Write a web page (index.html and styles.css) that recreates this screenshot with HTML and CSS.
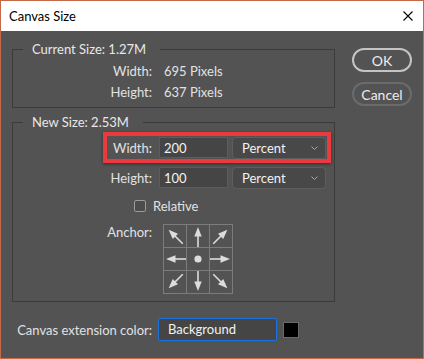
FILE: index.html
```html
<!DOCTYPE html>
<html lang="en">
<head>
  <meta charset="UTF-8" />
  <meta name="viewport" content="width=device-width, initial-scale=1.0"/>
  <title>Canvas Size</title>
  <link rel="stylesheet" href="styles.css">
</head>
<body>

<div class="dialog">
  <header class="titlebar">
    <span class="title">Canvas Size</span>
    <svg class="close" width="10" height="10" viewBox="0 0 10 10">
      <path d="M0.5 0.5 L9.5 9.5 M9.5 0.5 L0.5 9.5" stroke="#000" stroke-width="1.1" fill="none"/>
    </svg>
  </header>

  <div class="content">
    <form class="main">
      <fieldset class="group current">
        <legend>Current Size: 1.27M</legend>
        <div class="rows">
          <span class="label">Width:</span><span class="value">695 Pixels</span>
          <span class="label">Height:</span><span class="value">637 Pixels</span>
        </div>
      </fieldset>

      <fieldset class="group newsize">
        <legend>New Size: 2.53M</legend>
        <div class="fields">
          <label class="label">Width:</label>
          <input class="text" value="200">
          <div class="select">Percent<svg class="chevron" width="7" height="4" viewBox="0 0 7 4"><path d="M0.5 0.5 L3.5 3.5 L6.5 0.5" stroke="#a8a8a8" fill="none"/></svg></div>

          <label class="label">Height:</label>
          <input class="text" value="100">
          <div class="select">Percent<svg class="chevron" width="7" height="4" viewBox="0 0 7 4"><path d="M0.5 0.5 L3.5 3.5 L6.5 0.5" stroke="#a8a8a8" fill="none"/></svg></div>

          <span class="highlight"></span>
        </div>

        <div class="relative">
          <span class="checkbox"></span>
          <span>Relative</span>
        </div>

        <div class="anchor-row">
          <span class="label">Anchor:</span>
          <div class="anchor">
            <div class="cell"><svg viewBox="0 0 22 22"><g transform="rotate(-45 11 11)"><path d="M11 2 L14.7 11.5 L7.3 11.5 Z"/><path class="shaft" d="M11 11 L11 22"/></g></svg></div>
            <div class="cell"><svg viewBox="0 0 22 22"><g><path d="M11 2 L14.7 11.5 L7.3 11.5 Z"/><path class="shaft" d="M11 11 L11 22"/></g></svg></div>
            <div class="cell"><svg viewBox="0 0 22 22"><g transform="rotate(45 11 11)"><path d="M11 2 L14.7 11.5 L7.3 11.5 Z"/><path class="shaft" d="M11 11 L11 22"/></g></svg></div>
            <div class="cell"><svg viewBox="0 0 22 22"><g transform="rotate(-90 11 11)"><path d="M11 2 L14.7 11.5 L7.3 11.5 Z"/><path class="shaft" d="M11 11 L11 22"/></g></svg></div>
            <div class="cell"><svg viewBox="0 0 22 22"><circle cx="11" cy="11" r="3.6"/></svg></div>
            <div class="cell"><svg viewBox="0 0 22 22"><g transform="rotate(90 11 11)"><path d="M11 2 L14.7 11.5 L7.3 11.5 Z"/><path class="shaft" d="M11 11 L11 22"/></g></svg></div>
            <div class="cell"><svg viewBox="0 0 22 22"><g transform="rotate(-135 11 11)"><path d="M11 2 L14.7 11.5 L7.3 11.5 Z"/><path class="shaft" d="M11 11 L11 22"/></g></svg></div>
            <div class="cell"><svg viewBox="0 0 22 22"><g transform="rotate(180 11 11)"><path d="M11 2 L14.7 11.5 L7.3 11.5 Z"/><path class="shaft" d="M11 11 L11 22"/></g></svg></div>
            <div class="cell"><svg viewBox="0 0 22 22"><g transform="rotate(135 11 11)"><path d="M11 2 L14.7 11.5 L7.3 11.5 Z"/><path class="shaft" d="M11 11 L11 22"/></g></svg></div>
          </div>
        </div>
      </fieldset>

      <div class="extension">
        <span class="label">Canvas extension color:</span>
        <div class="color-field">Background</div>
        <span class="swatch"></span>
      </div>
    </form>

    <div class="buttons">
      <button class="btn primary">OK</button>
      <button class="btn">Cancel</button>
    </div>
  </div>
</div>

</body>
</html>
```

FILE: styles.css
```css
:root {
  --panel: #535353;
  --text: #e2e2e2;
  --frame: #3b3b3b;
  --field: #454545;
}

* {
  box-sizing: border-box;
  margin: 0;
  padding: 0;
}

body {
  font-family: "Lato", "Open Sans", sans-serif;
  font-size: 13px;
  color: var(--text);
}

.dialog {
  width: 424px;
  height: 359px;
  border: 1px solid #c4694a;
  display: flex;
  flex-direction: column;
  background: var(--panel);
}

/* Title bar */
.titlebar {
  height: 30px;
  background: #fff;
  display: flex;
  align-items: center;
  justify-content: space-between;
  padding: 0 10px 0 8px;
}

.title {
  color: #000;
  font-size: 13px;
}

.close {
  display: block;
  margin-top: -1px;
}

/* Body */
.content {
  flex: 1;
  display: flex;
  padding: 10px 0 0 11px;
}

.main {
  width: 323px;
}

.group {
  border: 1px solid var(--frame);
  padding: 0;
}

.group legend {
  margin-left: 10px;
  padding: 0 14px 0 9px;
  line-height: 16px;
  color: #e8e8e8;
}

.label {
  text-align: right;
  line-height: 16px;
}

/* Current size */
.current {
  padding: 4px 0 5px;
}

.rows {
  display: grid;
  grid-template-columns: 139px auto;
  grid-auto-rows: 20px;
  row-gap: 1px;
  column-gap: 12px;
  align-items: center;
}

/* New size */
.newsize {
  margin-top: 6px;
  padding: 7px 0 7px;
}

.fields {
  position: relative;
  display: grid;
  grid-template-columns: 142px 69px 94px;
  grid-auto-rows: 22px;
  column-gap: 4px;
  row-gap: 8px;
  align-items: center;
}

.fields .label {
  padding-right: 3px;
}

.text {
  height: 21px;
  align-self: start;
  background: var(--field);
  border: 1px solid #5c5c5c;
  color: #f2f2f2;
  font: inherit;
  padding: 0 4px;
  outline: none;
}

.select {
  height: 22px;
  background: #484848;
  border: 1px solid #5e5e5e;
  border-radius: 4px;
  display: flex;
  align-items: center;
  justify-content: space-between;
  padding: 0 7px 0 9px;
  color: #f2f2f2;
}

.highlight {
  position: absolute;
  left: 90px;
  top: -5px;
  width: 228px;
  height: 31px;
  border: 4px solid #ea3a40;
  box-shadow: 0 1px 3px rgba(0, 0, 0, 0.45);
  pointer-events: none;
}

.relative {
  margin-top: 9px;
  height: 16px;
  padding-left: 121px;
  display: flex;
  align-items: center;
  gap: 7px;
}

.checkbox {
  width: 12px;
  height: 12px;
  border: 1px solid #9a9a9a;
  border-radius: 2px;
  background: #4c4c4c;
}

.anchor-row {
  margin-top: 10px;
  display: flex;
  gap: 11px;
}

.anchor-row .label {
  width: 139px;
}

.anchor {
  display: grid;
  grid-template-columns: repeat(3, 22px);
  grid-auto-rows: 22px;
  gap: 1px;
  padding: 1px;
  background: #7c7c7c;
}

.cell {
  background: var(--panel);
}

.cell svg {
  display: block;
  width: 22px;
  height: 22px;
  fill: #dcdcdc;
}

.cell .shaft {
  stroke: #dcdcdc;
  stroke-width: 1.6;
  fill: none;
}

/* Extension color */
.extension {
  margin-top: 16px;
  display: grid;
  grid-template-columns: 140px 119px 16px;
  column-gap: 6px;
  align-items: center;
}

.color-field {
  height: 23px;
  background: var(--field);
  border: 1px solid #1a73e0;
  border-radius: 2px;
  padding-left: 9px;
  line-height: 21px;
  color: #f2f2f2;
}

.swatch {
  width: 16px;
  height: 16px;
  background: #000;
  border: 1px solid #6a6a6a;
}

/* Buttons */
.buttons {
  margin: 7px 0 0 17px;
  display: flex;
  flex-direction: column;
  gap: 10px;
}

.btn {
  width: 60px;
  height: 24px;
  border-radius: 12px;
  background: transparent;
  border: 2px solid #6b6b6b;
  color: #ececec;
  font: inherit;
  font-size: 14px;
}

.btn.primary {
  border-color: #c4c4c4;
}
```
